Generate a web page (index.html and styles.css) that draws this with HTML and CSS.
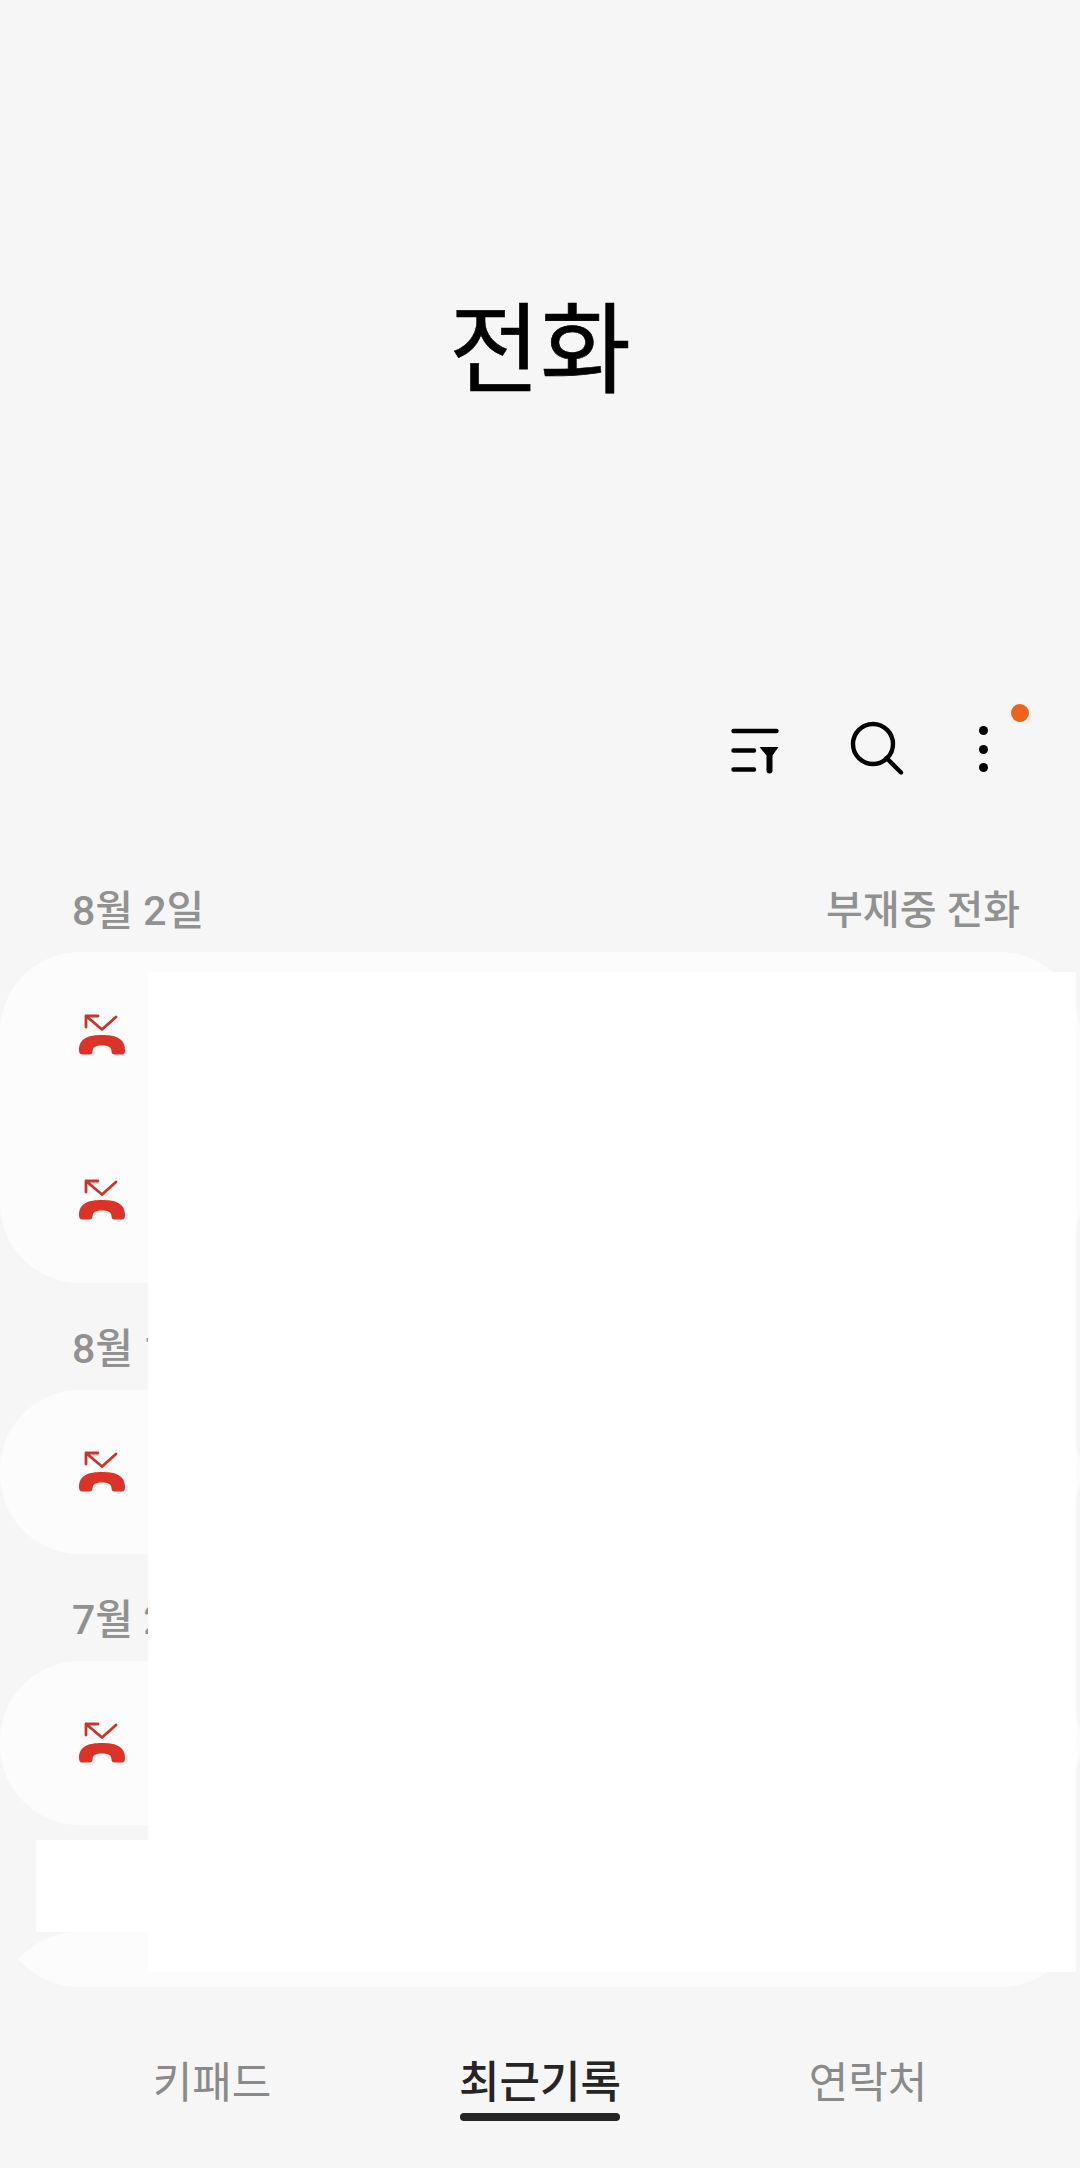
FILE: index.html
```html
<!DOCTYPE html>
<html lang="ko">
<head>
	<meta charset="UTF-8">
	<title>전화</title>
	<link rel="stylesheet" href="styles.css">
</head>
<body>
	<div id="page">
		<header class="title">전화</header>

		<div class="toolbar">
			<svg class="tool tool-filter" width="48" height="46" viewBox="0 0 48 46">
				<path d="M2.500 3H45.500M2.500 22.500H23M2.500 41.500H23" fill="none" stroke="#000" stroke-width="4.400" stroke-linecap="round"/>
				<path d="M28.500 19H47.500L41.500 27.500V42.500A3 3 0 0 1 35.500 42.500V27.500Z" fill="#000"/>
			</svg>
			<svg class="tool tool-search" width="54" height="54" viewBox="0 0 54 54">
				<circle cx="23" cy="23" r="20" fill="none" stroke="#000" stroke-width="4.400"/>
				<path d="M36.500 37L51 51.500" fill="none" stroke="#000" stroke-width="4.400" stroke-linecap="round"/>
			</svg>
			<div class="tool tool-more">
				<span></span><span></span><span></span>
				<i class="badge"></i>
			</div>
		</div>

		<div class="date-row"><span>8월 2일</span><span class="filter-name">부재중 전화</span></div>
		<ul class="card">
			<li class="row"><svg class="missed"><use href="#missed"/></svg></li>
			<li class="row"><svg class="missed"><use href="#missed"/></svg></li>
		</ul>

		<div class="date-row"><span>8월 1일</span></div>
		<ul class="card">
			<li class="row single"><svg class="missed"><use href="#missed"/></svg></li>
		</ul>

		<div class="date-row"><span>7월 28일</span></div>
		<ul class="card">
			<li class="row single"><svg class="missed"><use href="#missed"/></svg></li>
		</ul>

		<div class="card-cut"></div>

		<nav class="tabs">
			<div class="tab">키패드</div>
			<div class="tab active">최근기록</div>
			<div class="tab">연락처</div>
		</nav>

		<!-- 가림 영역 -->
		<div class="mask mask-main"></div>
		<div class="mask mask-small"></div>
	</div>

	<svg width="0" height="0" class="defs">
		<symbol id="missed" viewBox="0 0 48 42">
			<path d="M8 13V2H20M8 2L24 15.500L38 3" fill="none" stroke="#c9342c" stroke-width="2.800" stroke-linecap="round" stroke-linejoin="round"/>
			<path d="M1 36C1 24 11 21 24 21C37 21 47 24 47 36C47 39 46 40.500 44 40.500H36.500C34.500 40.500 33.500 39.500 33.500 37.500C33.500 33 30 31.500 24 31.500C18 31.500 14.500 33 14.500 37.500C14.500 39.500 13.500 40.500 11.500 40.500H4C2 40.500 1 39 1 36Z" fill="#dc3228"/>
		</symbol>
	</svg>
</body>
</html>
```

FILE: styles.css
```css
*{margin:0; padding:0;}
li{list-style: none;}
html,body{height:100%;}
body{background:#f6f6f6; font-family:Roboto,"Noto Sans CJK KR",sans-serif;}

#page{position:relative; width:1080px; height:2168px; overflow:hidden; display:flex; flex-direction:column;}

.title{height:698px; padding-bottom:14px; box-sizing:border-box; display:flex; align-items:center; justify-content:center; font-size:99px; font-weight:400; -webkit-text-stroke:0.6px #000; color:#000; font-family:"Noto Sans CJK KR",sans-serif;}

.toolbar{height:102px; margin-bottom:45px; display:flex; align-items:center; padding-right:80px; justify-content:flex-end;}
.tool{flex:none;}
.tool-filter{margin-right:71px; margin-top:3px;}
.tool-search{margin-right:71px; margin-top:-2px;}
.tool-more{position:relative; width:16px; height:46px; display:flex; flex-direction:column; justify-content:space-between; align-items:center; margin-right:9px;}
.tool-more span{width:9px; height:9px; border-radius:50%; background:#000;}
.badge{position:absolute; width:18px; height:18px; border-radius:50%; background:#ef6219; left:36px; top:-22px;}

.date-row{height:43px; padding-top:40px; padding-bottom:24px; padding-left:72px; padding-right:60px; display:flex; justify-content:space-between; align-items:center; font-size:41px; font-weight:500; color:#919191;}
.filter-name{font-size:40px;}

.card{background:#fcfcfc; border-radius:80px;}
.row{height:165.500px; display:flex; align-items:center; padding-left:78px;}
.row.single{height:164px;}
.missed{width:48px; height:42px; display:block;}

.card-cut{height:55px; margin:107px 18px 0; background:#fcfcfc; clip-path:path("M0 27C15 12 35 0 62 0H982C1009 0 1029 12 1044 27C1029 43 1009 55 982 55H62C35 55 15 43 0 27Z");}

.tabs{flex:1; display:grid; grid-template-columns:repeat(3,328px); padding:0 48px; align-items:start;}
.tab{position:relative; margin-top:66px; line-height:60px; text-align:center; font-size:43px; color:#8a8a8a;}
.tab.active{color:#252525; font-weight:500; font-size:44px;}
.tab.active::after{content:""; position:absolute; left:84px; right:84px; top:60px; height:8px; border-radius:4px; background:#252525;}

.mask{position:absolute; background:#fff;}
.mask-main{left:148px; top:972px; width:928px; height:1000px;}
.mask-small{left:36px; top:1840px; width:112px; height:92px;}
.defs{position:absolute;}
```
